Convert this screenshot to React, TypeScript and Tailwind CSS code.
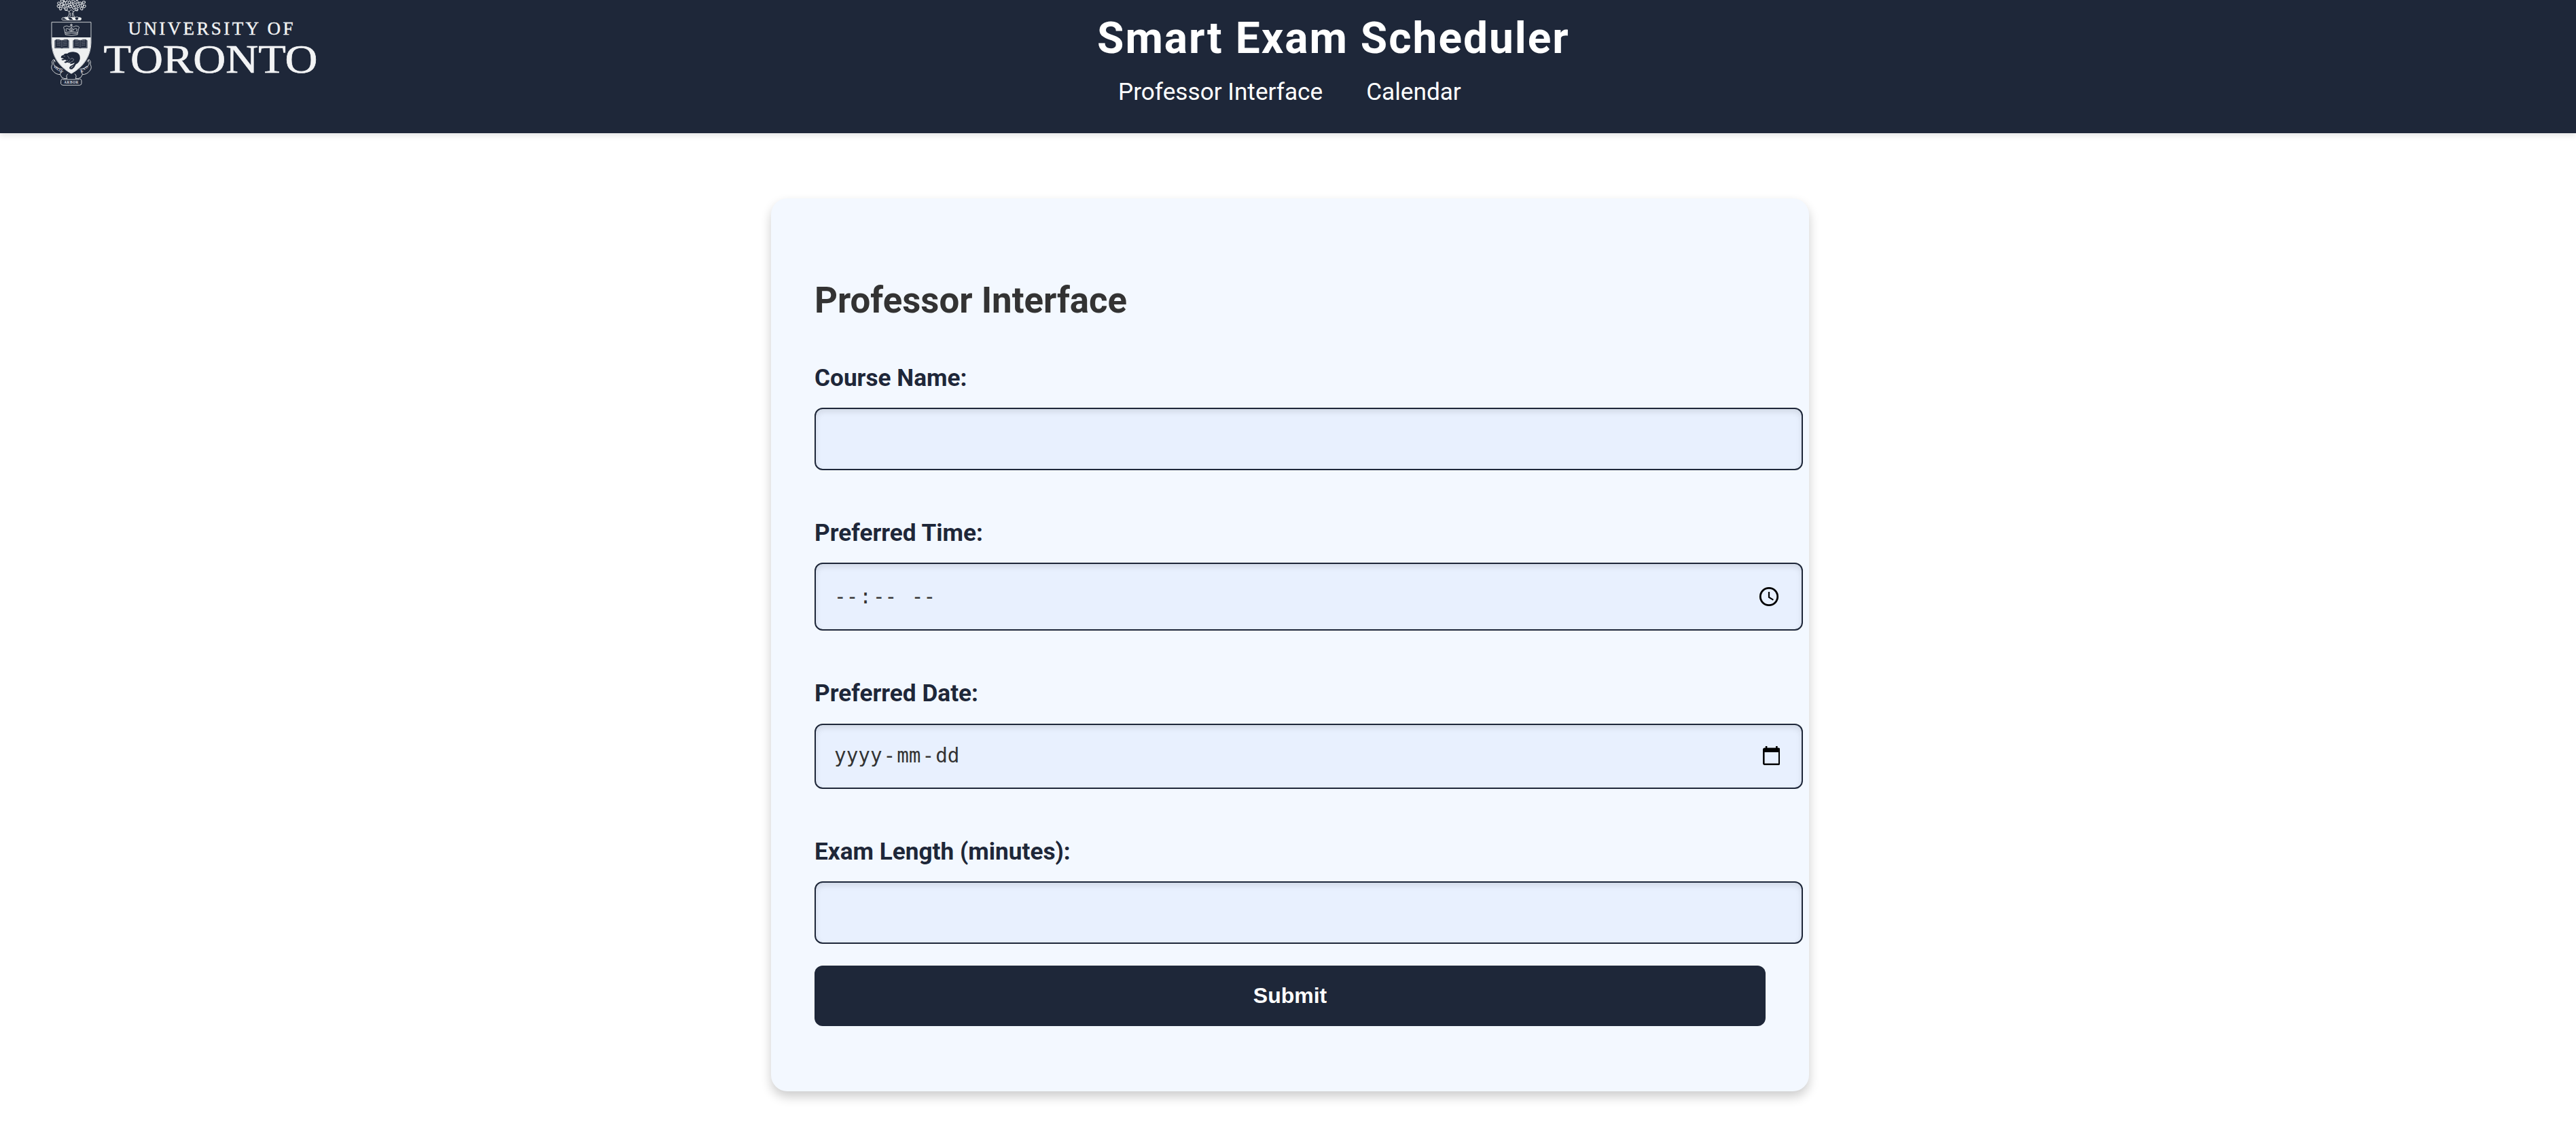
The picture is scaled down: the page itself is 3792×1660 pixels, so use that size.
import React from 'react';

interface FieldProps {
  id: string;
  label: string;
  labelClassName?: string;
  children: React.ReactNode;
}

const inputClass =
  'w-[1455px] rounded-[12px] border-2 border-[#1e2739] bg-[#e8f0fe] shadow-[inset_0_4px_8px_rgba(0,0,0,0.1)] text-[#333333]';

const Field: React.FC<FieldProps> = ({ id, label, labelClassName = 'mb-5', children }) => (
  <div className="flex flex-col">
    <label
      htmlFor={id}
      className={`h-12 whitespace-nowrap text-[35.2px] leading-[48px] font-bold text-[#1e2739] ${labelClassName}`}
    >
      {label}
    </label>
    {children}
  </div>
);

interface SegmentsProps {
  id: string;
  parts: string[];
  className: string;
  icon: React.ReactNode;
}

// Empty date/time picker: every second part is a separator
const Segments: React.FC<SegmentsProps> = ({ id, parts, className, icon }) => (
  <div id={id} tabIndex={0} className={`${inputClass} flex items-center justify-between pl-[25px] ${className}`}>
    <div className="flex font-['DejaVu_Sans_Mono',monospace] text-[29.3px] leading-[38px] whitespace-pre">
      {parts.map((part, i) => (
        <span key={i} className={i % 2 === 0 ? 'px-[2px]' : ''}>
          {part}
        </span>
      ))}
    </div>
    {icon}
  </div>
);

const ClockIcon = () => (
  <svg viewBox="0 0 28 28" className="size-7 overflow-visible" fill="none" stroke="#000">
    <circle cx="14" cy="14" r="12.7" strokeWidth="2.8" />
    <path d="M14 7v8l6.4 3.9" strokeWidth="2.2" />
  </svg>
);

const CalendarIcon = () => (
  <svg viewBox="2 1 20 22" className="h-7 w-[25.5px]">
    <path d="M20 3h-1V1h-2v2H7V1H5v2H4c-1.1 0-2 .9-2 2v16c0 1.1.9 2 2 2h16c1.1 0 2-.9 2-2V5c0-1.1-.9-2-2-2zm0 18H4V8h16v13z" />
  </svg>
);

const Book: React.FC<{ x: number }> = ({ x }) => (
  <g transform={`translate(${x} 173)`}>
    <path d="M0 4l5 0V0Q22-1 33 4 44-1 61 0V4h5V41H37q-4 3-8 0H0Z" fill="#1e2739" />
    <path
      d="M4 8V37H28M62 8V37H38M33 6V38M10 5q10-1 18 3M10 12q10-1 18 3M10 19q10-1 18 3M10 26q10-1 18 3M56 5q-10-1-18 3M56 12q-10-1-18 3M56 19q-10-1-18 3M56 26q-10-1-18 3"
      fill="none"
      stroke="#aeb4be"
      strokeWidth="1.6"
    />
  </g>
);

const leaves = [
  [80, 14], [78, 28], [88, 38], [92, 20], [94, 5], [102, 30], [104, 14], [112, 40], [110, 3],
  [117, 24], [126, 10], [130, 30], [135, 18], [143, 6], [146, 34], [151, 21], [158, 42], [160, 8],
  [166, 28], [174, 14], [180, 38], [183, 24], [193, 28], [190, 10],
];

const Crest = () => (
  <g stroke="#eef0f1" fill="none" strokeWidth="2.5">
    {leaves.map(([cx, cy], i) => (
      <ellipse key={i} cx={cx} cy={cy} rx="6.5" ry="5" strokeWidth="3" transform={`rotate(${(i * 47) % 180} ${cx} ${cy})`} />
    ))}
    <path d="M116 76q12-8 9-26l-20-8M152 76q-11-8-8-26l22-8M125 52l9-10 10 10M130 72V56M139 72V56" />
    <path d="M92 84q2-8 11-6 8-5 15-1 8-5 17 0 8-4 17 0 8-5 15 0 12-1 12 7 0 6-11 5H102q-9 1-10-5Z" />
    <path d="M104 79l14 9h9l-9-11ZM136 78l8 10h10l-4-10ZM168 78l-4 10h12l2-8Z" fill="#eef0f1" />

    {/* ribbon */}
    <path d="M57 262Q45 270 51 284 42 300 54 313 66 329 86 329L93 342Q105 350 117 346 109 336 120 326M63 264Q50 276 62 292 76 304 98 306M57 262l8 12M86 329l5-19" />
    <path d="M213 262Q225 270 219 284 228 300 216 313 204 329 184 329L177 342Q165 350 153 346 161 336 150 326M207 264Q220 276 208 292 194 304 172 306M213 262l-8 12M184 329l-5-19" />
    <path d="M95 348Q89 351 89 358V370Q91 376 99 376H172Q180 375 180 368V356Q179 350 173 348Q170 352 160 351H108Q97 352 95 348Z" />
    <g fill="#d9dce0" stroke="none" fontFamily="Liberation Serif, serif" fontWeight="700" fontSize="16">
      <text x="103" y="370" textLength="63">ARBOR</text>
      <text transform="translate(55 296) rotate(36)" textLength="48">VELUT</text>
      <text transform="translate(177 323) rotate(-38)" textLength="43">ÆVO</text>
    </g>

    {/* shield */}
    <path d="M48 98H222V190Q219 278 135 325 51 278 48 190Z" fill="#1e2739" />
    <path d="M49 165H221V190Q218 277 135 325 52 277 49 190Z" fill="#eef0f1" stroke="none" />
    <path d="M109 153L104 129Q97 118 107 116 116 111 126 119 133 109 145 119 156 111 164 116 174 119 166 129L162 153Q136 161 109 153ZM108 143Q135 136 163 143M110 149Q135 143 161 149M114 138Q106 121 123 128L130 137M157 138Q165 121 148 128L141 137M135 137V119M127 129l8-8 9 8-9 7ZM135 104v13M129 110h12" strokeWidth="2.3" />
    <Book x={60} />
    <Book x={141} />
    <path
      d="M89 255Q89 245 100 243 105 235 117 237 125 229 143 229 163 230 171 243 177 258 169 272 163 281 155 284 150 297 139 305 129 308 126 301 127 292 138 288 149 283 150 277 139 284 128 282L133 276Q124 279 118 275L108 278 103 274 113 269 108 263Q95 269 91 263 98 260 103 259Z"
      fill="#1e2739"
      stroke="none"
    />
    <path d="M101 247l6 2M117 246q8 5 9 14M130 262l8-5 8 5-5 9-9 3M111 268l9-2M121 273l8-5M133 297l12-7M132 302l9-8" stroke="#b9bec7" strokeWidth="1.8" />
  </g>
);

const Logo = () => (
  <svg viewBox="0 0 420 140" className="h-[140px] w-[420px]" role="img" aria-label="University of Toronto">
    <g transform="scale(0.33333)">
      <Crest />
    </g>
    <g fill="#f2f3f4" stroke="#f2f3f4" fontFamily="Liberation Serif, serif">
      <text x="128.5" y="50.8" fontSize="27" textLength="243" strokeWidth="0.4">
        UNIVERSITY OF
      </text>
      <text x="92.5" y="106.7" fontSize="60" textLength="315" lengthAdjust="spacingAndGlyphs" strokeWidth="0.7">
        TORONTO
      </text>
    </g>
  </svg>
);

const Header = () => (
  <header className="flex h-[196px] items-start bg-[#1e2739] pl-[60px] text-white shadow-[0_4px_8px_rgba(0,0,0,0.1)]">
    <Logo />
    <div className="ml-[1137px] flex flex-col">
      <h1 className="mt-[19px] h-[76px] -ml-[2px] whitespace-nowrap text-[64px] leading-[76px] font-bold tracking-[2px]">
        Smart Exam Scheduler
      </h1>
      <nav className="mt-[16px] ml-[29px] flex gap-16 whitespace-nowrap text-[35.2px] leading-[48px]">
        <a href="#professor">Professor Interface</a>
        <a href="#calendar">Calendar</a>
      </nav>
    </div>
  </header>
);

const ProfessorForm = () => (
  <form className="ml-[1135px] mt-24 h-[1314px] w-[1528px] rounded-[24px] bg-[#f3f8ff] px-16 pt-[118px] shadow-[0_8px_16px_rgba(0,0,0,0.2)]">
    <h2 className="mb-[58px] h-16 whitespace-nowrap text-[52.8px] leading-[64px] font-bold text-[#333333]">
      Professor Interface
    </h2>
    <div className="flex flex-col gap-[68px]">
      <Field id="course" label="Course Name:">
        <input id="course" type="text" className={`${inputClass} h-[92px] px-[26px] text-[32px]`} />
      </Field>
      <Field id="time" label="Preferred Time:">
        <Segments
          id="time"
          parts={['--', ':', '--', ' ', '--']}
          className="h-[100px] pr-[34px]"
          icon={<ClockIcon />}
        />
      </Field>
      <Field id="date" label="Preferred Date:" labelClassName="mb-[21px]">
        <Segments
          id="date"
          parts={['yyyy', '-', 'mm', '-', 'dd']}
          className="h-[96px] pr-[32px] pb-[2px]"
          icon={<CalendarIcon />}
        />
      </Field>
      <Field id="length" label="Exam Length (minutes):">
        <input id="length" type="text" className={`${inputClass} h-[92px] px-[26px] text-[32px]`} />
      </Field>
    </div>
    <button
      type="button"
      className="mt-8 h-[89px] w-full rounded-[12px] bg-[#1e2739] pb-[2px] font-['Liberation_Sans',sans-serif] text-[32px] font-bold text-white"
    >
      Submit
    </button>
  </form>
);

export default function App() {
  return (
    <div className="h-[1660px] w-[3792px] overflow-hidden bg-white font-['Roboto',sans-serif]">
      <Header />
      <ProfessorForm />
    </div>
  );
}
